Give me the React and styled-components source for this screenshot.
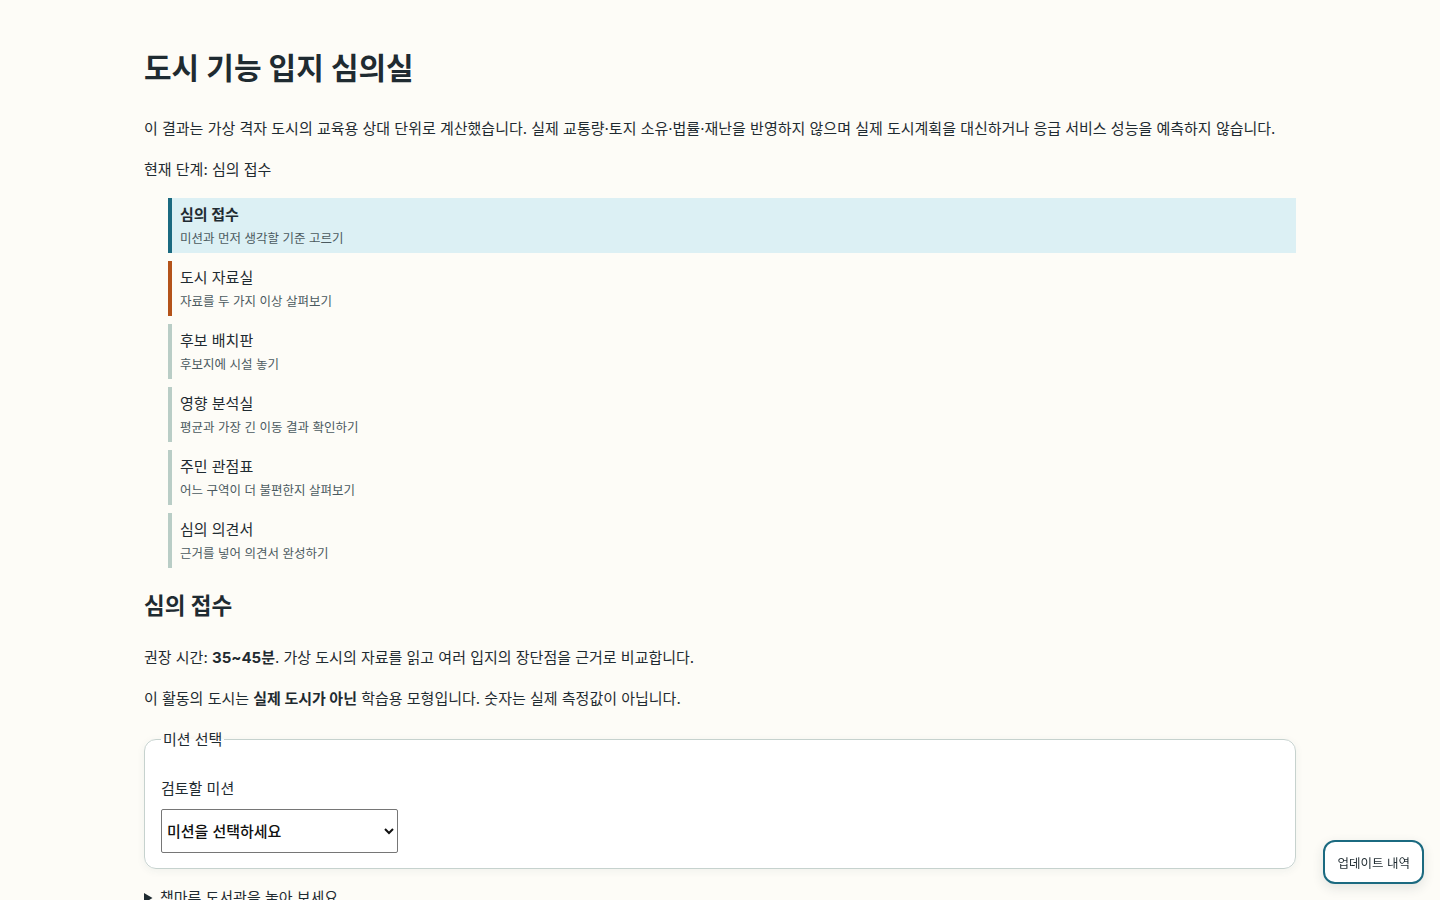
import React, { useState } from 'react';
import styled, { createGlobalStyle } from 'styled-components';

const GlobalStyle = createGlobalStyle`
  html, body {
    margin: 0;
    padding: 0;
    background: #fdfcf7;
  }
  html {
    font-size: 15px;
  }
  body {
    color: #1f2b31;
    font-family: "Inter", "Noto Sans CJK KR", "Noto Sans", sans-serif;
    font-size: 1rem;
    line-height: 1.68;
  }
`;

const Page = styled.main`
  max-width: 1152px;
  margin: 0 auto;
  padding: 50px 0 40px;
`;

const Title = styled.h1`
  margin: 0 0 30px;
  font-size: 2rem;
  line-height: 1.2;
  font-weight: 700;
`;

const Para = styled.p`
  margin: 0 0 16px;
`;

const StepList = styled.ol`
  list-style: none;
  margin: 0 0 23px;
  padding: 0 0 0 24px;
  display: flex;
  flex-direction: column;
  gap: 8px;
`;

const Step = styled.li`
  display: flex;
  flex-direction: column;
  padding: 5px 8px 4px;
  border-left: 4px solid ${({ $tone }) => $tone};
  background: ${({ $active }) => ($active ? '#dcf0f4' : 'transparent')};
`;

const StepName = styled.span`
  font-size: 1rem;
  line-height: 24px;
  font-weight: ${({ $active }) => ($active ? 700 : 400)};
`;

const StepHint = styled.span`
  margin-top: 2px;
  font-size: 12.5px;
  line-height: 20px;
  color: #4b5a5f;
`;

const Heading = styled.h2`
  margin: 0 0 24px;
  font-size: 1.5rem;
  line-height: 1.3;
  font-weight: 700;
`;

const Panel = styled.fieldset`
  margin: 0 0 16px;
  padding: 11px 16px 15px;
  border: 1px solid #c6d2ce;
  border-radius: 12px;
  background: #ffffff;
  box-shadow: 0 2px 8px rgba(40, 60, 60, 0.06);
`;

const Legend = styled.legend`
  padding: 0 2px;
`;

const FieldLabel = styled.label`
  display: block;
  margin: 13px 0 8px;
`;

const Select = styled.select`
  width: 237px;
  height: 44px;
  padding: 0 1px;
  font-family: inherit;
  font-size: 1rem;
  font-weight: 500;
  color: #111;
  background: #fff;
  border: 1px solid #767676;
  border-radius: 2px;
`;

const Details = styled.details`
  summary {
    cursor: pointer;
  }
`;

const HistoryButton = styled.button`
  position: fixed;
  right: 16px;
  bottom: 16px;
  height: 44px;
  padding: 0 12px;
  font-family: inherit;
  font-size: 12.5px;
  color: #1f2b31;
  background: #fff;
  border: 2px solid #1b6a80;
  border-radius: 12px;
  box-shadow: 0 4px 12px rgba(30, 50, 60, 0.12);
  cursor: pointer;
`;

const steps = [
  { name: '심의 접수', hint: '미션과 먼저 생각할 기준 고르기', tone: '#1b6a80' },
  { name: '도시 자료실', hint: '자료를 두 가지 이상 살펴보기', tone: '#b4531a' },
  { name: '후보 배치판', hint: '후보지에 시설 놓기', tone: '#b9cdc6' },
  { name: '영향 분석실', hint: '평균과 가장 긴 이동 결과 확인하기', tone: '#b9cdc6' },
  { name: '주민 관점표', hint: '어느 구역이 더 불편한지 살펴보기', tone: '#b9cdc6' },
  { name: '심의 의견서', hint: '근거를 넣어 의견서 완성하기', tone: '#b9cdc6' },
];

const App = () => {
  const [mission, setMission] = useState('');

  return (
    <>
      <GlobalStyle />
      <Page>
        <Title>도시 기능 입지 심의실</Title>
        <Para>
          이 결과는 가상 격자 도시의 교육용 상대 단위로 계산했습니다. 실제 교통량·토지 소유·법률·재난을 반영하지
          않으며 실제 도시계획을 대신하거나 응급 서비스 성능을 예측하지 않습니다.
        </Para>
        <Para>현재 단계: 심의 접수</Para>

        <StepList>
          {steps.map((s, i) => (
            <Step key={s.name} $tone={s.tone} $active={i === 0}>
              <StepName $active={i === 0}>{s.name}</StepName>
              <StepHint>{s.hint}</StepHint>
            </Step>
          ))}
        </StepList>

        <Heading>심의 접수</Heading>
        <Para>
          권장 시간: <strong>35~45분</strong>. 가상 도시의 자료를 읽고 여러 입지의 장단점을 근거로 비교합니다.
        </Para>
        <Para>
          이 활동의 도시는 <strong>실제 도시가 아닌</strong> 학습용 모형입니다. 숫자는 실제 측정값이 아닙니다.
        </Para>

        <Panel>
          <Legend>미션 선택</Legend>
          <FieldLabel htmlFor="mission">검토할 미션</FieldLabel>
          <Select id="mission" value={mission} onChange={(e) => setMission(e.target.value)}>
            <option value="">미션을 선택하세요</option>
            <option value="library">책마루 도서관</option>
          </Select>
        </Panel>

        <Details>
          <summary>책마루 도서관을 놓아 보세요</summary>
        </Details>
      </Page>
      <HistoryButton type="button">업데이트 내역</HistoryButton>
    </>
  );
};

export default App;
